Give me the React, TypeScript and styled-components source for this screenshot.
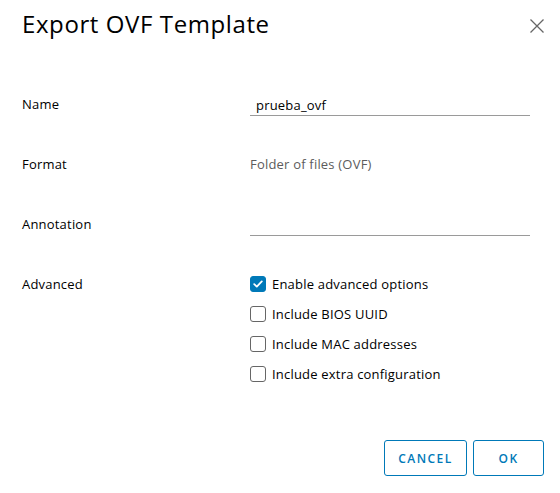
import React from 'react'
import styled, { createGlobalStyle } from 'styled-components';

const GlobalStyle = createGlobalStyle`
  html, body {
    margin: 0;
    padding: 0;
    background: #fff;
  }
  body {
    font-family: "Open Sans", "Liberation Sans", sans-serif;
    color: #000;
  }
`;

type CheckProps = {
  label: string;
  checked?: boolean;
}

const CheckOption: React.FC<CheckProps> = ({ label, checked = false }) => (
  <CheckRow>
    <CheckBox checked={checked}>
      {checked && (
        <svg width="10" height="8" viewBox="0 0 10 8">
          <path d="M1.2 4.2 L3.8 6.6 L8.8 1.4" fill="none" stroke="#fff" strokeWidth="1.8" strokeLinecap="round" strokeLinejoin="round" />
        </svg>
      )}
    </CheckBox>
    <span>{label}</span>
  </CheckRow>
)

const App: React.FC = () => {
  return (
    <>
      <GlobalStyle />
      <Dialog>
        <Header>
          <Title>Export OVF Template</Title>
          <CloseButton aria-label="close">
            <svg width="14" height="14" viewBox="0 0 14 14">
              <path d="M0.5 0.5 L13.5 13.5 M13.5 0.5 L0.5 13.5" stroke="#666" strokeWidth="1.3" />
            </svg>
          </CloseButton>
        </Header>

        <Form>
          <Row>
            <Label>Name</Label>
            <TextInput defaultValue="prueba_ovf" />
          </Row>
          <Row>
            <Label>Format</Label>
            <StaticValue>Folder of files (OVF)</StaticValue>
          </Row>
          <Row>
            <Label>Annotation</Label>
            <TextInput defaultValue="" />
          </Row>
          <Row tall>
            <Label>Advanced</Label>
            <CheckList>
              <CheckOption label="Enable advanced options" checked />
              <CheckOption label="Include BIOS UUID" />
              <CheckOption label="Include MAC addresses" />
              <CheckOption label="Include extra configuration" />
            </CheckList>
          </Row>
        </Form>

        <Footer>
          <OutlineButton>Cancel</OutlineButton>
          <OutlineButton wide={false}>OK</OutlineButton>
        </Footer>
      </Dialog>
    </>
  )
}

const Dialog = styled.div`
  width: 560px;
  height: 493px;
  box-sizing: border-box;
  padding: 8px 16px 0 22px;
  display: flex;
  flex-direction: column;
`;

const Header = styled.header`
  display: flex;
  justify-content: space-between;
  align-items: flex-start;
  height: 32px;
  margin-bottom: 54px;
`;

const Title = styled.h1`
  margin: 0;
  font-size: 24px;
  line-height: 32px;
  font-weight: 400;
  letter-spacing: 0.6px;
  color: #000;
`;

const CloseButton = styled.button`
  border: none;
  background: none;
  padding: 0;
  margin-top: 11px;
  width: 14px;
  height: 14px;
  display: flex;
  cursor: pointer;
`;

const Form = styled.div`
  display: flex;
  flex-direction: column;
  letter-spacing: 0.2px;
`;

const Row = styled.div<{ tall?: boolean }>`
  display: grid;
  grid-template-columns: 228px 280px;
  align-items: start;
  height: ${({ tall }) => tall ? 'auto' : '60px'};
`;

const Label = styled.label`
  font-size: 13px;
  line-height: 20px;
  color: #000;
`;

const TextInput = styled.input`
  font-family: inherit;
  font-size: 13px;
  line-height: 20px;
  letter-spacing: 0.2px;
  height: 22px;
  box-sizing: border-box;
  padding: 0 6px;
  border: none;
  border-bottom: 1px solid #9a9a9a;
  outline: none;
  color: #000;
  background: transparent;
  width: 280px;
`;

const StaticValue = styled.div`
  font-size: 13px;
  line-height: 20px;
  color: #5c5c5c;
`;

const CheckList = styled.div`
  display: flex;
  flex-direction: column;
  gap: 10px;
`;

const CheckRow = styled.div`
  display: flex;
  align-items: center;
  gap: 6px;
  height: 20px;
  font-size: 13px;
  color: #000;
`;

const CheckBox = styled.span<{ checked: boolean }>`
  width: 16px;
  height: 16px;
  box-sizing: border-box;
  border-radius: 3px;
  border: 1px solid ${({ checked }) => checked ? '#0079b8' : '#666'};
  background: ${({ checked }) => checked ? '#0079b8' : '#fff'};
  display: flex;
  align-items: center;
  justify-content: center;
`;

const Footer = styled.div`
  display: flex;
  justify-content: flex-end;
  gap: 6px;
  margin-top: 56px;
`;

const OutlineButton = styled.button<{ wide?: boolean }>`
  height: 36px;
  width: ${({ wide = true }) => wide ? '83px' : '71px'};
  box-sizing: border-box;
  padding: 0;
  border: 1px solid #0079b8;
  border-radius: 3px;
  background: #fff;
  color: #0079b8;
  font-family: inherit;
  font-size: 12px;
  font-weight: 600;
  letter-spacing: 0.12em;
  text-transform: uppercase;
  cursor: pointer;
`;

export default App;
